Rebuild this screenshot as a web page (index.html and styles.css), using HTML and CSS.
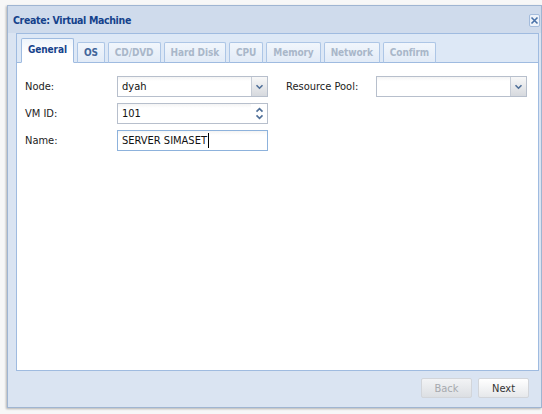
FILE: index.html
```html
<!DOCTYPE html>
<html lang="en">
<head>
<meta charset="utf-8">
<title>Create: Virtual Machine</title>
<link rel="stylesheet" href="styles.css">
</head>
<body>
<div class="window">
  <div class="win-header">
    <span class="win-title">Create: Virtual Machine</span>
    <span class="win-close" aria-label="Close">
      <svg width="9" height="9" viewBox="0 0 9 9"><path d="M1.5 1.5 L7.5 7.5 M7.5 1.5 L1.5 7.5" stroke="#4a72a8" stroke-width="1.6" fill="none"/></svg>
    </span>
  </div>
  <div class="win-main">
    <div class="tabpanel">
      <ul class="tabstrip">
        <li class="tab active">General</li>
        <li class="tab">OS</li>
        <li class="tab disabled">CD/DVD</li>
        <li class="tab disabled">Hard Disk</li>
        <li class="tab disabled">CPU</li>
        <li class="tab disabled">Memory</li>
        <li class="tab disabled">Network</li>
        <li class="tab disabled">Confirm</li>
      </ul>
      <div class="tab-body">
        <div class="form-col">
          <div class="form-row">
            <label class="form-label">Node:</label>
            <div class="field">
              <span class="field-text">dyah</span>
              <span class="trigger">
                <svg width="9" height="6" viewBox="0 0 9 6"><path d="M1.5 1.2 L4.5 4.2 L7.5 1.2" stroke="#4f6f98" stroke-width="1.6" fill="none"/></svg>
              </span>
            </div>
          </div>
          <div class="form-row">
            <label class="form-label">VM ID:</label>
            <div class="field">
              <span class="field-text">101</span>
              <span class="trigger spinner">
                <svg width="9" height="6" viewBox="0 0 9 6"><path d="M1.5 4.6 L4.5 1.6 L7.5 4.6" stroke="#4f6f98" stroke-width="1.6" fill="none"/></svg>
                <svg width="9" height="6" viewBox="0 0 9 6"><path d="M1.5 1.4 L4.5 4.4 L7.5 1.4" stroke="#4f6f98" stroke-width="1.6" fill="none"/></svg>
              </span>
            </div>
          </div>
          <div class="form-row">
            <label class="form-label">Name:</label>
            <div class="field focused">
              <span class="field-text">SERVER SIMASET<span class="caret"></span></span>
            </div>
          </div>
        </div>
        <div class="form-col">
          <div class="form-row">
            <label class="form-label">Resource Pool:</label>
            <div class="field">
              <span class="field-text"></span>
              <span class="trigger">
                <svg width="9" height="6" viewBox="0 0 9 6"><path d="M1.5 1.2 L4.5 4.2 L7.5 1.2" stroke="#4f6f98" stroke-width="1.6" fill="none"/></svg>
              </span>
            </div>
          </div>
        </div>
      </div>
    </div>
    <div class="win-footer">
      <button class="btn" disabled>Back</button>
      <button class="btn">Next</button>
    </div>
  </div>
</div>
</body>
</html>
```

FILE: styles.css
```css
* {
  box-sizing: border-box;
}

html,
body {
  margin: 0;
}

body {
  width: 542px;
  height: 414px;
  overflow: hidden;
  padding: 5px 0 0 7px;
  background: #f7f7f7;
  font-family: "DejaVu Sans Condensed", "DejaVu Sans", sans-serif;
  font-size: 11px;
  color: #111;
}

/* dialog window */
.window {
  width: 535px;
  height: 403px;
  display: flex;
  flex-direction: column;
  border: 1px solid #9fb5d2;
  background: #dae4f2;
  box-shadow: -1px 1px 2px rgba(0, 0, 0, 0.28);
}

.win-header {
  flex: none;
  height: 27px;
  display: flex;
  align-items: center;
  justify-content: space-between;
  padding: 1px 1px 0 5px;
  background: #cfdbec;
}

.win-title {
  font-weight: bold;
  font-size: 10.5px;
  letter-spacing: -0.35px;
  color: #15428b;
}

.win-close {
  width: 11px;
  height: 13px;
  display: flex;
  align-items: center;
  justify-content: center;
  border: 1px solid #a4bcdc;
  border-radius: 2px;
  background: #eef3fa;
}

.win-main {
  flex: 1;
  display: flex;
  flex-direction: column;
  padding: 0 2px 0 8px;
}

/* tab panel */
.tabpanel {
  flex: 1;
  display: flex;
  flex-direction: column;
}

.tabstrip {
  flex: none;
  height: 30px;
  margin: 0;
  padding: 0 0 0 4px;
  list-style: none;
  display: flex;
  align-items: flex-end;
  gap: 3px;
  border: 1px solid #9fbbe0;
  background: #dde8f6;
}

.tab {
  height: 21px;
  margin-bottom: -1px;
  padding: 0 6px;
  display: flex;
  align-items: center;
  border: 1px solid #adc6e6;
  border-bottom-color: #9fbbe0;
  border-radius: 2px 2px 0 0;
  background: linear-gradient(#f1f6fc, #e2ebf7);
  font-weight: bold;
  font-size: 10px;
  letter-spacing: -0.1px;
  color: #41659a;
}

.tab.active {
  height: 25px;
  padding-bottom: 3px;
  border-color: #9fbbe0;
  border-bottom-color: #ffffff;
  background: linear-gradient(#eef4fb, #ffffff 60%);
  color: #15428b;
  position: relative;
}

.tab.disabled {
  color: #a9b7c9;
}

.tab-body {
  flex: 1;
  display: flex;
  gap: 18px;
  padding: 13px 8px 0;
  border: 1px solid #9fbbe0;
  border-top: none;
  background: #ffffff;
}

/* form fields */
.form-col {
  display: flex;
  flex-direction: column;
  gap: 6px;
}

.form-row {
  display: flex;
  align-items: center;
  height: 21px;
}

.form-label {
  width: 92px;
  color: #222;
}

.form-col + .form-col .form-label {
  width: 90px;
}

.field {
  width: 151px;
  height: 21px;
  display: flex;
  border: 1px solid #b7bfcc;
  background: linear-gradient(#f4f4f4, #ffffff 4px);
}

.field.focused {
  border-color: #8db2dc;
}

.field-text {
  flex: 1;
  display: flex;
  align-items: center;
  padding-left: 4px;
  color: #111;
  white-space: nowrap;
}

.caret {
  width: 1px;
  height: 15px;
  margin-left: 1px;
  background: #000;
}

.trigger {
  width: 16px;
  display: flex;
  flex-direction: column;
  align-items: center;
  justify-content: center;
  border-left: 1px solid #c6ccd6;
  background: linear-gradient(#f8f8f8, #d6d9de);
}

.trigger.spinner {
  gap: 1px;
  background: #ffffff;
  border-left: none;
}

/* footer buttons */
.win-footer {
  flex: none;
  height: 36px;
  display: flex;
  justify-content: flex-end;
  align-items: flex-start;
  gap: 6px;
  padding: 7px 10px 0 0;
}

.btn {
  width: 51px;
  height: 20px;
  padding: 0;
  border: 1px solid #d2d5da;
  border-radius: 2px;
  background: linear-gradient(#ffffff, #e6e8eb);
  font-family: inherit;
  font-size: 11px;
  color: #333;
}

.btn:disabled {
  background: linear-gradient(#f2f3f5, #dcdfe3);
  color: #a6a9ae;
}
```
